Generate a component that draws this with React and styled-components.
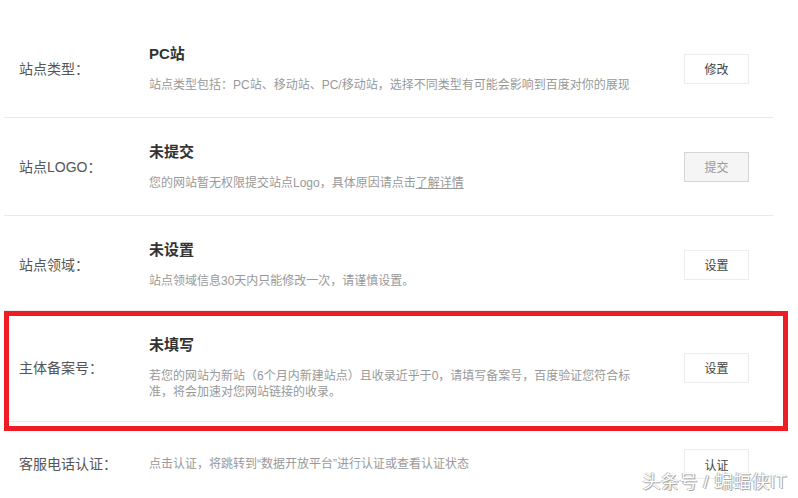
import React from "react";
import styled, { createGlobalStyle } from "styled-components";

const Global = createGlobalStyle`
  html, body { margin: 0; padding: 0; background: #fff; }
  body {
    font-family: "Liberation Sans", "Noto Sans CJK SC", sans-serif;
    color: #333;
  }
`;

const Page = styled.div`
  position: relative;
  width: 798px;
  height: 498px;
  overflow: hidden;
  padding-top: 21px;
  box-sizing: border-box;
`;

const List = styled.div`
  margin-left: 4px;
  width: 769px;
  display: flex;
  flex-direction: column;
`;

const Row = styled.div`
  display: flex;
  align-items: center;
  padding: ${(p) => (p.$pad ? p.$pad : "24px 0 24px")};
  border-bottom: ${(p) => (p.$last ? "none" : "1px solid #e9e9e9")};
`;

const Label = styled.div`
  width: 130px;
  padding-left: 15px;
  flex-shrink: 0;
  font-size: 14px;
  line-height: 20px;
  color: #555;
`;

const Info = styled.div`
  flex: 1;
  display: flex;
  flex-direction: column;
  gap: 13px;
`;

const Title = styled.div`
  font-size: 15px;
  line-height: 20px;
  font-weight: bold;
  color: #333;
`;

const Desc = styled.div`
  font-size: 12px;
  line-height: 16px;
  color: #999;
  white-space: nowrap;
`;

const Link = styled.span`
  text-decoration: underline;
  color: #999;
`;

const Button = styled.div`
  width: 65px;
  height: 30px;
  margin-right: 24px;
  flex-shrink: 0;
  box-sizing: border-box;
  display: flex;
  align-items: center;
  justify-content: center;
  font-size: 12px;
  color: ${(p) => (p.$disabled ? "#999" : "#444")};
  background: ${(p) => (p.$disabled ? "#f5f5f5" : "#fff")};
  border: 1px solid ${(p) => (p.$disabled ? "#d6d6d6" : "#ececec")};
`;

const Highlight = styled.div`
  position: absolute;
  left: 4px;
  top: 311px;
  width: 784px;
  height: 120px;
  box-sizing: border-box;
  border: 5px solid #ee1c25;
  pointer-events: none;
`;

const Watermark = styled.div`
  position: absolute;
  right: 11px;
  top: 471px;
  font-size: 18px;
  line-height: 22px;
  color: #fff;
  letter-spacing: 0.5px;
  text-shadow: 0 0 1px #8a8a8a, 1px 1px 0 #b0b0b0, -1px 0 0 #c8c8c8;
  white-space: nowrap;
`;

export default function App() {
  return (
    <>
      <Global />
      <Page>
        <List>
          <Row $pad="23px 0 24px">
            <Label>站点类型：</Label>
            <Info>
              <Title>PC站</Title>
              <Desc>站点类型包括：PC站、移动站、PC/移动站，选择不同类型有可能会影响到百度对你的展现</Desc>
            </Info>
            <Button>修改</Button>
          </Row>
          <Row>
            <Label>站点LOGO：</Label>
            <Info>
              <Title>未提交</Title>
              <Desc>
                您的网站暂无权限提交站点Logo，具体原因请点击<Link>了解详情</Link>
              </Desc>
            </Info>
            <Button $disabled>提交</Button>
          </Row>
          <Row $pad="24px 0 21px">
            <Label>站点领域：</Label>
            <Info>
              <Title>未设置</Title>
              <Desc>站点领域信息30天内只能修改一次，请谨慎设置。</Desc>
            </Info>
            <Button>设置</Button>
          </Row>
          <Row $pad="24px 0 21px">
            <Label>主体备案号：</Label>
            <Info>
              <Title>未填写</Title>
              <Desc>
                若您的网站为新站（6个月内新建站点）且收录近乎于0，请填写备案号，百度验证您符合标
                <br />
                准，将会加速对您网站链接的收录。
              </Desc>
            </Info>
            <Button>设置</Button>
          </Row>
          <Row $last $pad="27px 0">
            <Label>客服电话认证：</Label>
            <Info>
              <Desc>点击认证，将跳转到“数据开放平台”进行认证或查看认证状态</Desc>
            </Info>
            <Button>认证</Button>
          </Row>
        </List>
        <Highlight />
        <Watermark>头条号 / 蝙蝠侠IT</Watermark>
      </Page>
    </>
  );
}
